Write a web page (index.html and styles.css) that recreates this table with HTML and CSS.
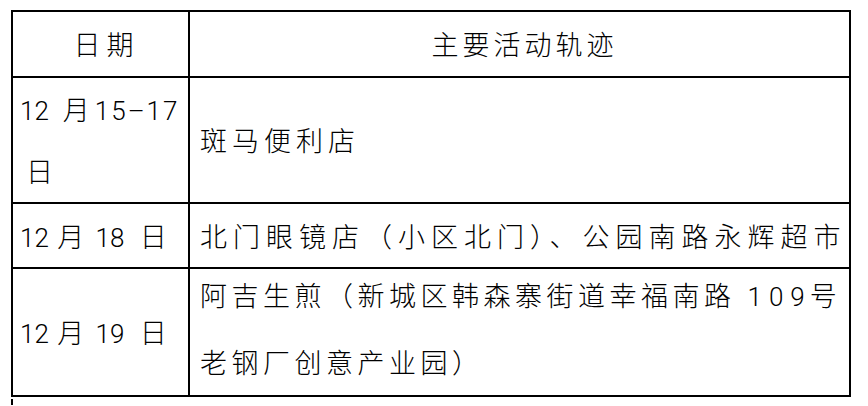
FILE: index.html
```html
<!DOCTYPE html>
<html lang="zh-CN">
<head>
<meta charset="utf-8">
<title>主要活动轨迹</title>
<link rel="stylesheet" href="styles.css">
</head>
<body>
<table class="trace">
  <colgroup><col class="c-date"><col class="c-place"></colgroup>
  <thead>
    <tr class="r-head"><th class="h-date">日期</th><th class="h-place">主要活动轨迹</th></tr>
  </thead>
  <tbody>
    <tr class="r-tall1">
      <td class="date">
        <div class="lines lines-date">
          <div><span class="lat">12</span><span class="m1">月</span><span class="lat range">15–17</span></div>
          <div class="d2">日</div>
        </div>
      </td>
      <td class="place">斑马便利店</td>
    </tr>
    <tr class="r-short">
      <td class="date"><span class="lat">12 </span><span class="mo">月</span><span class="lat"> 18 </span><span class="after-num">日</span></td>
      <td class="place wide">北门眼镜店（小区北门）、公园南路永辉超市</td>
    </tr>
    <tr class="r-tall2">
      <td class="date"><span class="lat">12 </span><span class="mo">月</span><span class="lat"> 19 </span><span class="after-num">日</span></td>
      <td class="place">
        <div class="lines lines-place">
          <div>阿吉生煎（新城区韩森寨街道幸福南路<span class="lat num">109</span>号</div>
          <div>老钢厂创意产业园）</div>
        </div>
      </td>
    </tr>
  </tbody>
</table>
<div class="caret"></div>
</body>
</html>
```

FILE: styles.css
```css
html, body {
  margin: 0;
  padding: 0;
  background: #ffffff;
}

.trace {
  border-collapse: collapse;
  table-layout: fixed;
  width: 840px;
  margin: 10px 0 0 11px;
  font-family: "Noto Sans CJK SC", sans-serif;
  font-size: 27px;
  font-weight: 300;
  color: #000000;
  letter-spacing: 5px;
}

.c-date { width: 177px; }

.trace th,
.trace td {
  border: 2px solid #000000;
  padding: 0 0 0 10px;
  font-weight: 300;
  white-space: nowrap;
  vertical-align: middle;
  line-height: 34px;
}

.trace th { text-align: center; }
.trace td { text-align: left; }

.trace th.h-date { padding-left: 12px; letter-spacing: 6px; }
.trace th.h-place { letter-spacing: 4px; }

.trace td.date { padding-left: 7px; }
.trace td.wide { letter-spacing: 6px; }

.r-head { height: 66px; }
.r-tall1 { height: 126px; }
.r-short { height: 65px; }
.r-tall2 { height: 128px; }

.lines {
  display: flex;
  flex-direction: column;
}
.lines-date { gap: 28px; }
.lines-place { gap: 33px; padding-bottom: 8px; letter-spacing: 4.5px; }

.lat {
  font-family: Roboto, "Liberation Sans", sans-serif;
  font-size: 26px;
  font-weight: 300;
  letter-spacing: 0;
  word-spacing: -1px;
  line-height: 1;
}

.range { letter-spacing: 2px; }
.num {
  letter-spacing: 7px;
  margin-left: 12px;
  margin-right: -2px;
}

.m1 { margin-left: 14px; }
.mo { margin-left: 3px; letter-spacing: 6px; }
.d2 { padding-left: 6px; }
.after-num { margin-left: 10px; }

.caret {
  width: 2px;
  height: 6px;
  margin: 2px 0 0 11px;
  background: #000000;
}
```
